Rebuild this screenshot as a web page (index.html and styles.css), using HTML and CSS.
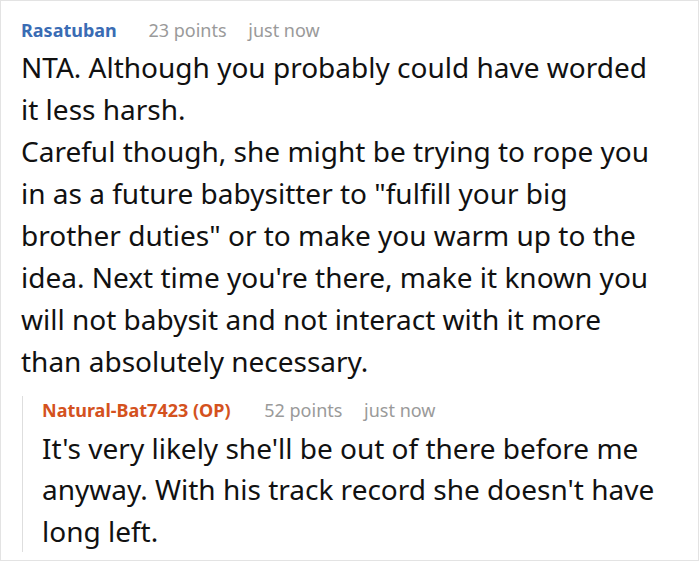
FILE: index.html
```html
<!DOCTYPE html>
<html lang="en">
<head>
    <meta charset="UTF-8">
    <title>Comments</title>
    <link rel="stylesheet" href="styles.css">
</head>
<body>
    <div class="thread">
        <div class="comment">
            <div class="meta">
                <span class="author">Rasatuban</span>
                <span class="points">23 points</span>
                <span class="time">just now</span>
            </div>
            <p class="text">NTA. Although you probably could have worded it less harsh.<br>Careful though, she might be trying to rope you in as a future babysitter to "fulfill your big brother duties" or to make you warm up to the idea. Next time you're there, make it known you will not babysit and not interact with it more than absolutely necessary.</p>
        </div>
        <div class="reply">
            <div class="meta">
                <span class="author op">Natural-Bat7423 (OP)</span>
                <span class="points">52 points</span>
                <span class="time">just now</span>
            </div>
            <p class="text">It's very likely she'll be out of there before me anyway. With his track record she doesn't have long left.</p>
        </div>
    </div>
</body>
</html>
```

FILE: styles.css
```css
body {
    margin: 0;
    font-family: "Noto Sans", "Open Sans", sans-serif;
    background: #fff;
}
.thread {
    width: 699px;
    height: 561px;
    box-sizing: border-box;
    border: 1px solid #e3e3e3;
    padding: 15px 38px 0 20px;
    overflow: hidden;
}
.meta {
    font-size: 18px;
    line-height: 28px;
    color: #9a9a9a;
    margin-bottom: 2px;
    white-space: nowrap;
}
.author {
    font-weight: bold;
    color: #3a6cb4;
    margin-right: 27px;
}
.author.op {
    color: #d4521e;
    margin-right: 29px;
}
.points {
    margin-right: 17px;
}
.text {
    margin: 0;
    font-size: 28px;
    line-height: 42px;
    color: #111;
}
.reply {
    margin: 28px 0 0 1px;
    padding-left: 19px;
    border-left: 1px solid #dedede;
}
.reply .meta {
    margin-top: -14px;
    margin-bottom: 4px;
}
.reply .text {
    line-height: 41.3px;
    margin-bottom: -9px;
}
```
